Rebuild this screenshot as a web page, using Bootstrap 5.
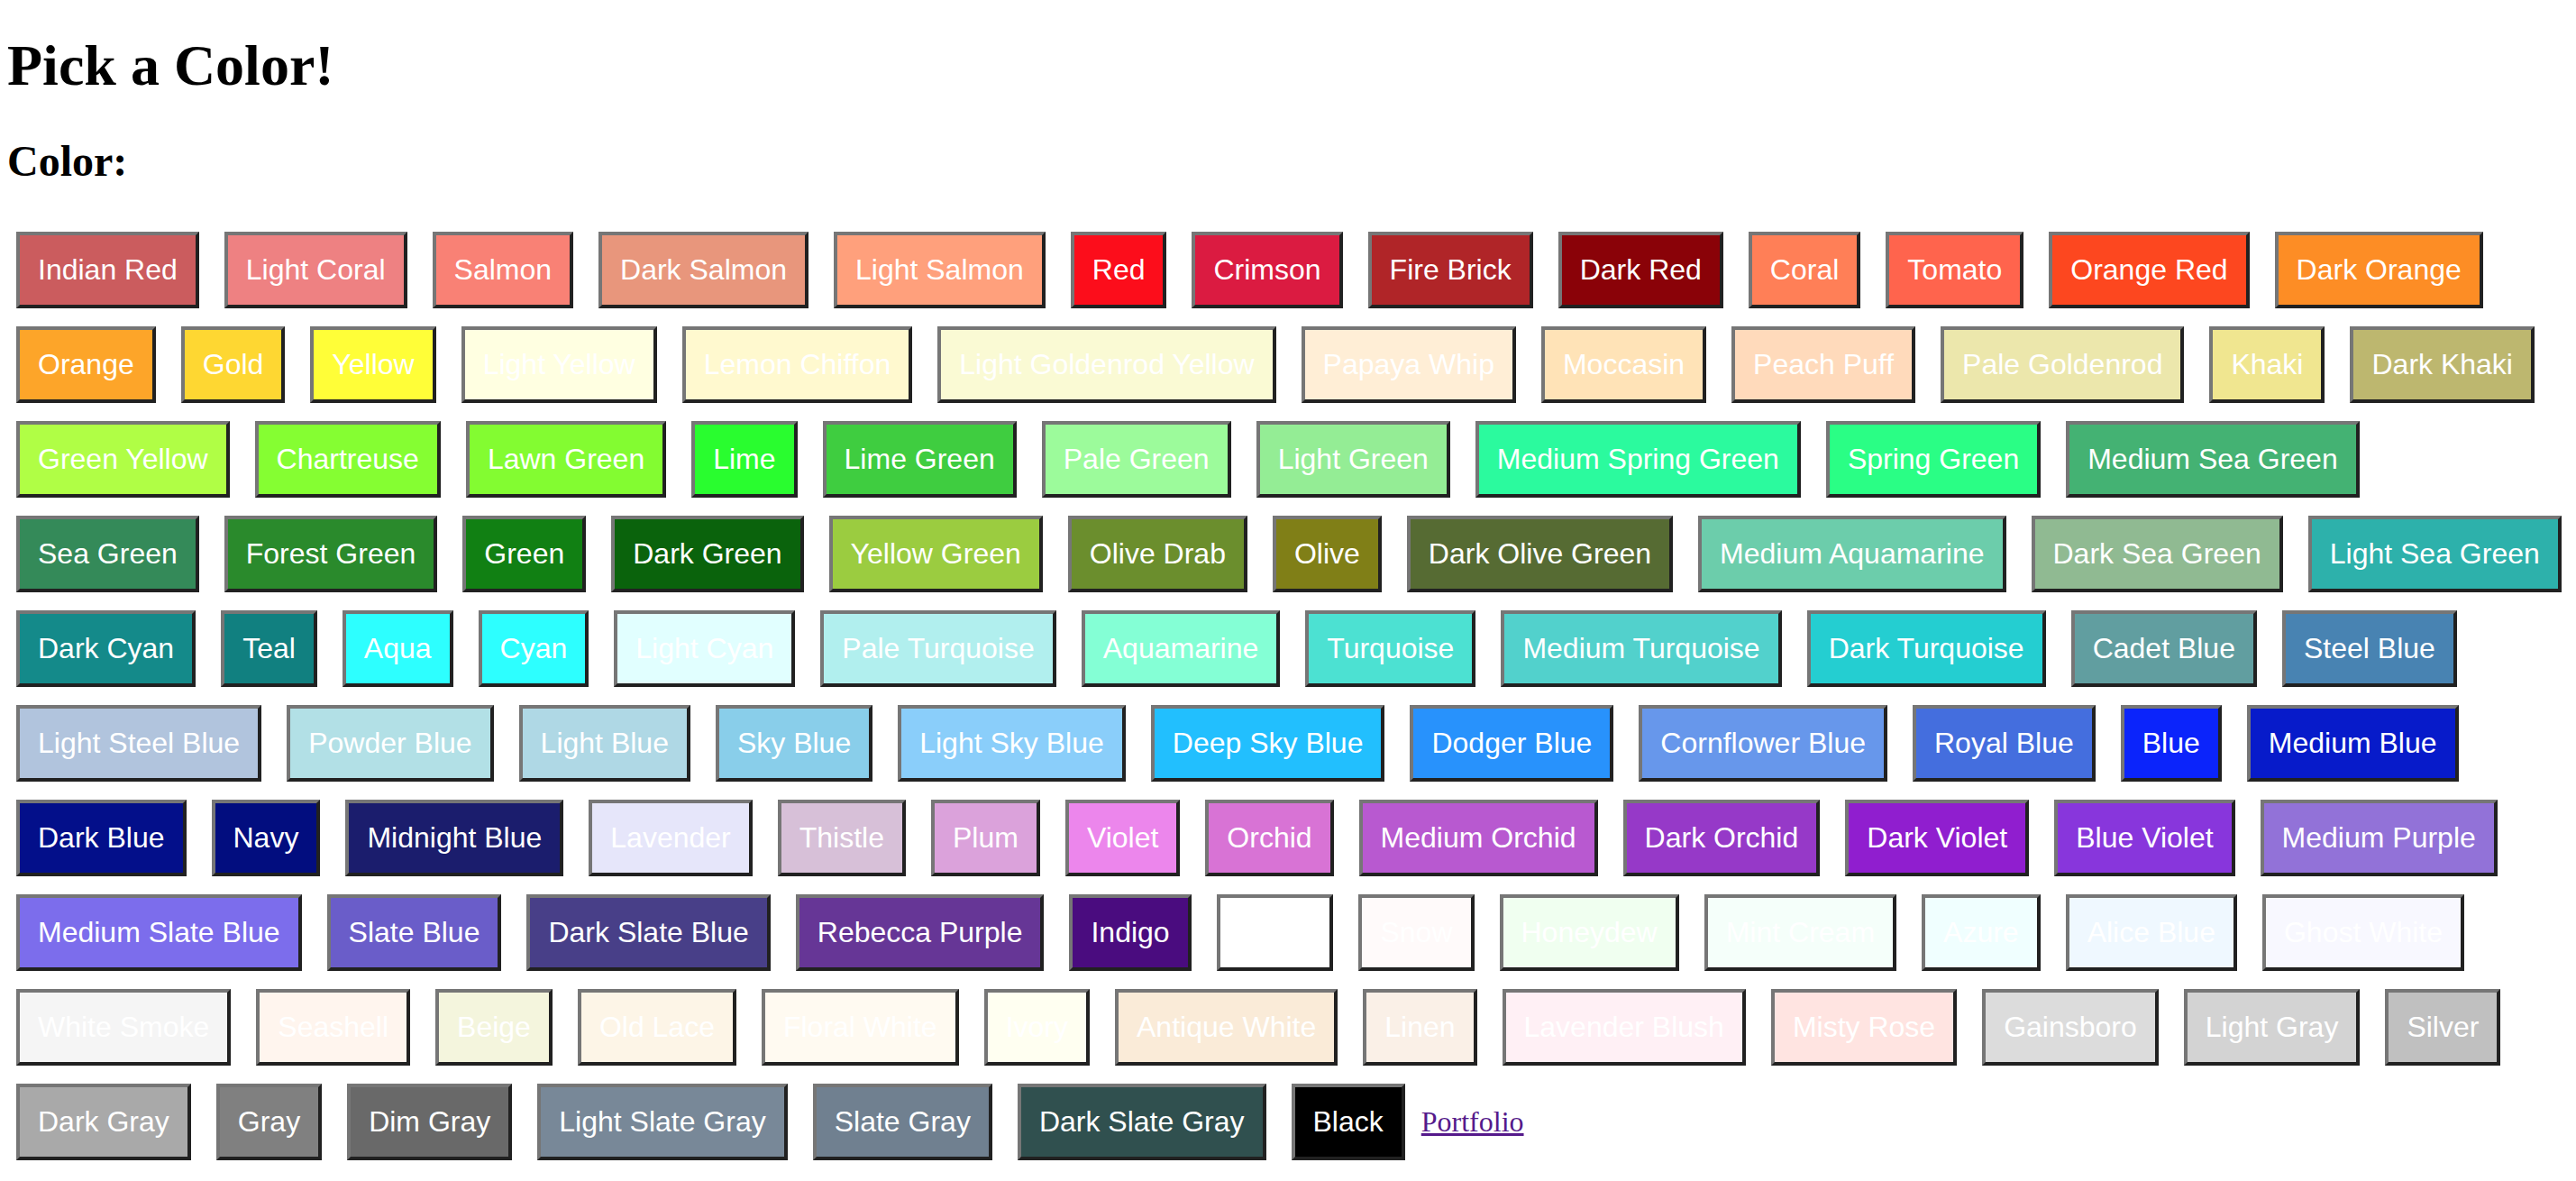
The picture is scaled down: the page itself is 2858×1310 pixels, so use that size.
<!DOCTYPE html>
<html lang="en">
<head>
<meta charset="utf-8">
<meta name="viewport" content="width=device-width, initial-scale=1">
<title>Pick a Color!</title>
<link rel="stylesheet" href="https://cdn.jsdelivr.net/npm/bootstrap@5.3.0/dist/css/bootstrap.min.css">
<style>
body { font: 32px/37px "Liberation Serif", "Times New Roman", serif; color: #000; background: #fff; padding: 36px 4px 0 8px; }
h1 { font-size: 64px; line-height: 74px; margin-bottom: 41px; }
h2 { font-size: 48px; line-height: 56px; margin-bottom: 40px; }
.swatch { font-family: "Liberation Sans", Arial, sans-serif; font-size: 32px; line-height: 37px; margin: 10px; padding: 20px; color: #fff; border: 4px solid; border-color: #767676 #212121 #212121 #767676; vertical-align: baseline; }
.swatch:hover { color: #fff; border-color: #212121 #767676 #767676 #212121; }
.visited-link { color: #551a8b; }
</style>
</head>
<body>
<h1 class="fw-bold">Pick a Color!</h1>
<h2 class="fw-bold">Color:</h2>
<main id="palette"><a class="visited-link" href="#">Portfolio</a></main>
<script src="https://cdn.jsdelivr.net/npm/bootstrap@5.3.0/dist/js/bootstrap.bundle.min.js"></script>
<script>
const colors = {
  'Indian Red': '#cb5c5e', 'Light Coral': '#ee8182', 'Salmon': '#f98175', 'Dark Salmon': '#e8967c', 'Light Salmon': '#ffa07c', 'Red': '#fc0d1b', 'Crimson': '#db1b41', 'Fire Brick': '#b02528', 'Dark Red': '#8a0208', 'Coral': '#ff7f57', 'Tomato': '#ff644d', 'Orange Red': '#fd471f', 'Dark Orange': '#fd8d25',
  'Orange': '#fda529', 'Gold': '#fed732', 'Yellow': '#fffe38', 'Light Yellow': '#ffffe1', 'Lemon Chiffon': '#fff9cf', 'Light Goldenrod Yellow': '#fafad4', 'Papaya Whip': '#ffeed6', 'Moccasin': '#ffe3b7', 'Peach Puff': '#ffdabb', 'Pale Goldenrod': '#ece7ac', 'Khaki': '#f0e690', 'Dark Khaki': '#bdb76f',
  'Green Yellow': '#b0fe45', 'Chartreuse': '#85fe32', 'Lawn Green': '#83fc31', 'Lime': '#29fd2f', 'Lime Green': '#3fcd40', 'Pale Green': '#9cfb9b', 'Light Green': '#94ed95', 'Medium Spring Green': '#2bfa9e', 'Spring Green': '#2afe85', 'Medium Sea Green': '#44b273',
  'Sea Green': '#348a59', 'Forest Green': '#2a8a2c', 'Green': '#118013', 'Dark Green': '#0a630c', 'Yellow Green': '#9bcc40', 'Olive Drab': '#6b8e2d', 'Olive': '#807f17', 'Dark Olive Green': '#566b33', 'Medium Aquamarine': '#6ccdab', 'Dark Sea Green': '#90ba92', 'Light Sea Green': '#2db1ab',
  'Dark Cyan': '#148a8a', 'Teal': '#118080', 'Aqua': '#2dffff', 'Cyan': '#2dffff', 'Light Cyan': '#e1ffff', 'Pale Turquoise': '#b1efee', 'Aquamarine': '#84ffd5', 'Turquoise': '#4ce1d2', 'Medium Turquoise': '#52d1cc', 'Dark Turquoise': '#24ced1', 'Cadet Blue': '#619ea0', 'Steel Blue': '#4883b2',
  'Light Steel Blue': '#b1c4dd', 'Powder Blue': '#b2e0e6', 'Light Blue': '#afd8e5', 'Sky Blue': '#89ceea', 'Light Sky Blue': '#8acefa', 'Deep Sky Blue': '#22bffe', 'Dodger Blue': '#2892fc', 'Cornflower Blue': '#6797eb', 'Royal Blue': '#446ede', 'Blue': '#0b24fb', 'Medium Blue': '#071bca',
  'Dark Blue': '#030f8a', 'Navy': '#020d7f', 'Midnight Blue': '#1b1d6d', 'Lavender': '#e6e6fa', 'Thistle': '#d7c0d8', 'Plum': '#dba2db', 'Violet': '#ec86ec', 'Orchid': '#d873d5', 'Medium Orchid': '#b859d0', 'Dark Orchid': '#9639c8', 'Dark Violet': '#901ecf', 'Blue Violet': '#8836dc', 'Medium Purple': '#9272d8',
  'Medium Slate Blue': '#7c6dec', 'Slate Blue': '#6a5dc9', 'Dark Slate Blue': '#483f88', 'Rebecca Purple': '#663696', 'Indigo': '#4a0c7f', 'White': '#ffffff', 'Snow': '#fffafa', 'Honeydew': '#f0fff0', 'Mint Cream': '#f5fffa', 'Azure': '#f0ffff', 'Alice Blue': '#eff8ff', 'Ghost White': '#f8f8ff',
  'White Smoke': '#f5f5f5', 'Seashell': '#fff5ee', 'Beige': '#f4f5dd', 'Old Lace': '#fdf5e7', 'Floral White': '#fffaf1', 'Ivory': '#fffff1', 'Antique White': '#faebd8', 'Linen': '#faf0e7', 'Lavender Blush': '#fff0f5', 'Misty Rose': '#ffe4e1', 'Gainsboro': '#dcdcdc', 'Light Gray': '#d3d3d3', 'Silver': '#c0c0c0',
  'Dark Gray': '#a9a9a9', 'Gray': '#808080', 'Dim Gray': '#696969', 'Light Slate Gray': '#788898', 'Slate Gray': '#708090', 'Dark Slate Gray': '#30504f', 'Black': '#000000'
};
const palette = document.getElementById('palette');
const link = palette.querySelector('a');
for (const [name, value] of Object.entries(colors)) {
  const button = document.createElement('button');
  button.type = 'button';
  button.className = 'btn rounded-0 swatch';
  button.style.backgroundColor = value;
  button.textContent = name;
  palette.insertBefore(button, link);
  palette.insertBefore(document.createTextNode(' '), link);
}
</script>
</body>
</html>
